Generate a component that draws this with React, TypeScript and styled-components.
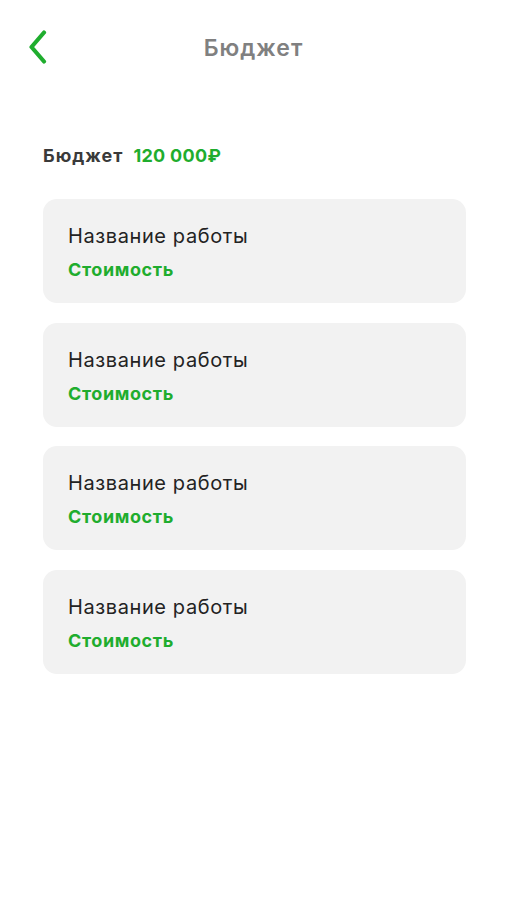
import React from "react";
import styled, { createGlobalStyle } from "styled-components";

const Global = createGlobalStyle`
  html, body { margin: 0; padding: 0; background: #ffffff; }
  body { font-family: Inter, "Open Sans", "Noto Sans", sans-serif; }
`;

const Page = styled.div`
  width: 507px;
  min-height: 900px;
  box-sizing: border-box;
  background: #ffffff;
  display: flex;
  flex-direction: column;
`;

const Header = styled.header`
  position: relative;
  height: 96px;
  display: flex;
  align-items: center;
  justify-content: center;
`;

const BackButton = styled.button`
  position: absolute;
  left: 22px;
  top: 26px;
  width: 32px;
  height: 42px;
  padding: 0;
  border: none;
  background: none;
  display: flex;
  align-items: center;
  justify-content: center;
  cursor: pointer;
`;

const Title = styled.h1`
  margin: 0;
  font-size: 23px;
  font-weight: 600;
  color: #808080;
  letter-spacing: 1px;
`;

const Content = styled.main`
  padding: 49px 41px 0 43px;
  display: flex;
  flex-direction: column;
`;

const BudgetRow = styled.div`
  display: flex;
  align-items: baseline;
  gap: 10px;
  font-size: 18px;
  font-weight: 700;
  margin-bottom: 33px;
`;

const BudgetLabel = styled.span`
  color: #3a3a3a;
  letter-spacing: 1px;
`;

const BudgetValue = styled.span`
  color: #1fad2e;
  letter-spacing: 0.3px;
`;

const List = styled.div`
  display: flex;
  flex-direction: column;
  gap: 19.5px;
`;

const Card = styled.div`
  height: 104px;
  box-sizing: border-box;
  background: #f2f2f2;
  border-radius: 14px;
  padding: 25px 25px 0 25px;
  display: flex;
  flex-direction: column;
  gap: 11px;
`;

const WorkName = styled.div`
  font-size: 20px;
  font-weight: 400;
  color: #232323;
  line-height: 24px;
  letter-spacing: 0.6px;
`;

const Cost = styled.div`
  font-size: 18px;
  font-weight: 700;
  color: #1fad2e;
  line-height: 22px;
  letter-spacing: 0.6px;
`;

const items = [1, 2, 3, 4];

export default function App() {
  return (
    <Page>
      <Global />
      <Header>
        <BackButton aria-label="Назад">
          <svg width="22" height="34" viewBox="0 0 22 34" fill="none">
            <path
              d="M17 2.5 L4.5 17 L17 31.5"
              stroke="#1fad2e"
              strokeWidth="4.2"
              strokeLinecap="round"
              strokeLinejoin="round"
            />
          </svg>
        </BackButton>
        <Title>Бюджет</Title>
      </Header>
      <Content>
        <BudgetRow>
          <BudgetLabel>Бюджет</BudgetLabel>
          <BudgetValue>120 000₽</BudgetValue>
        </BudgetRow>
        <List>
          {items.map((i) => (
            <Card key={i}>
              <WorkName>Название работы</WorkName>
              <Cost>Стоимость</Cost>
            </Card>
          ))}
        </List>
      </Content>
    </Page>
  );
}
